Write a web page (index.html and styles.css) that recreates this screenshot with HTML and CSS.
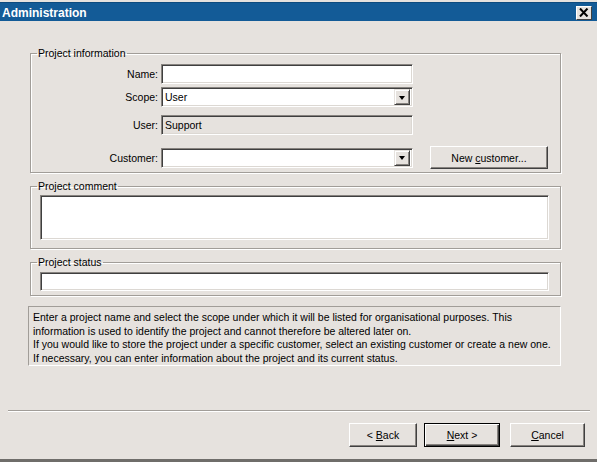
FILE: index.html
```html
<!DOCTYPE html>
<html>
<head>
<meta charset="utf-8">
<link rel="stylesheet" href="styles.css">
</head>
<body>
<div class="window">
  <div class="titlebar">
    <span class="title">Administration</span>
    <span class="close"><svg width="10" height="9" viewBox="0 0 10 9"><path d="M1 0.5 L8.5 8.5 M8.5 0.5 L1 8.5" stroke="#000" stroke-width="2"/></svg></span>
  </div>
  <div class="content">
    <fieldset class="group group-info">
      <legend>Project information</legend>
      <div class="row">
        <label class="lbl">Name:</label>
        <div class="field"></div>
      </div>
      <div class="row row-scope">
        <label class="lbl">Scope:</label>
        <div class="field combo"><span class="val">User</span><span class="drop"><span class="tri"></span></span></div>
      </div>
      <div class="row row-user">
        <label class="lbl">User:</label>
        <div class="field readonly"><span class="val">Support</span></div>
      </div>
      <div class="row row-customer">
        <label class="lbl">Customer:</label>
        <div class="field combo"><span class="val"></span><span class="drop"><span class="tri"></span></span></div>
        <button class="btn btn-new">New <u>c</u>ustomer...</button>
      </div>
    </fieldset>
    <fieldset class="group group-comment">
      <legend>Project comment</legend>
      <div class="field textarea"></div>
    </fieldset>
    <fieldset class="group group-status">
      <legend>Project status</legend>
      <div class="field status"></div>
    </fieldset>
    <div class="info">Enter a project name and select the scope under which it will be listed for organisational purposes. This information is used to identify the project and cannot therefore be altered later on.<br>If you would like to store the project under a specific customer, select an existing customer or create a new one.<br>If necessary, you can enter information about the project and its current status.</div>
  </div>
  <div class="separator"></div>
  <div class="buttons">
    <button class="btn btn-back">&lt; <u>B</u>ack</button>
    <button class="btn btn-next"><u>N</u>ext &gt;</button>
    <button class="btn btn-cancel"><u>C</u>ancel</button>
  </div>
</div>
</body>
</html>
```

FILE: styles.css
```css
html, body {
  margin: 0;
  padding: 0;
}
body {
  background: #e6e2de;
  font-family: "Liberation Sans", Arial, sans-serif;
  font-size: 10.5px;
  color: #000;
}
.window {
  width: 597px;
  height: 462px;
  box-sizing: border-box;
  padding-top: 2px;
  border-bottom: 3px solid #6f6d6a;
  display: flex;
  flex-direction: column;
  background: #e6e2de;
}
.titlebar {
  height: 19px;
  background: #135b97;
  border-top: 1px solid #0d4b7f;
  box-sizing: border-box;
  display: flex;
  align-items: center;
  justify-content: space-between;
  padding: 1px 5px 0 2px;
}
.title {
  color: #fff;
  font-weight: bold;
  font-size: 12px;
}
.close {
  width: 16px;
  height: 14px;
  box-sizing: border-box;
  background: #e6e2de;
  border: 1px solid;
  border-color: #fff #404040 #404040 #fff;
  display: flex;
  align-items: center;
  justify-content: center;
}
.content {
  padding: 26px 36px 0 30px;
  display: flex;
  flex-direction: column;
}
.group {
  margin: 0;
  padding: 0;
  border: 1px solid #a19d98;
  box-shadow: inset 1px 1px 0 #fff, 1px 1px 0 #fff;
  min-width: 0;
}
.group legend {
  padding: 0 1px;
  margin-left: 6px;
  line-height: 13px;
  font-size: 10.5px;
}
.group-info {
  padding: 4px 0 3px 0;
}
.row {
  display: flex;
  align-items: center;
  height: 20px;
}
.row-scope { margin-top: 3px; }
.row-user { margin-top: 8px; }
.row-customer { margin-top: 11px; height: 23px; }
.lbl {
  width: 127px;
  margin-right: 3px;
  text-align: right;
}
.field {
  width: 252px;
  height: 20px;
  box-sizing: border-box;
  background: #fff;
  border: 1px solid;
  border-color: #87837f #fff #fff #87837f;
  box-shadow: inset 1px 1px 0 #3f3f3f, inset -1px -1px 0 #dcd8d3;
  display: flex;
  align-items: center;
  padding: 0 2px 0 3px;
}
.readonly {
  background: #e6e2de;
}
.val {
  flex: 1;
}
.drop {
  width: 16px;
  height: 16px;
  box-sizing: border-box;
  background: #e6e2de;
  border: 1px solid;
  border-color: #e6e2de #404040 #404040 #e6e2de;
  box-shadow: inset 1px 1px 0 #fff, inset -1px -1px 0 #87837f;
  display: flex;
  align-items: center;
  justify-content: center;
}
.tri {
  width: 0;
  height: 0;
  border-left: 3.5px solid transparent;
  border-right: 3.5px solid transparent;
  border-top: 4px solid #000;
  margin-top: 1px;
}
.btn {
  font-family: "Liberation Sans", Arial, sans-serif;
  font-size: 10.5px;
  color: #000;
  background: #e6e2de;
  border: 1px solid;
  border-color: #fff #404040 #404040 #fff;
  box-shadow: inset -1px -1px 0 #87837f;
  padding: 0;
  height: 23px;
  box-sizing: border-box;
}
.btn-new {
  margin-left: 17px;
  width: 118px;
}
.group-comment {
  margin-top: 7px;
  padding: 2px 11px 8px 9px;
}
.group-comment legend,
.group-status legend {
  margin-left: -3px;
}
.textarea {
  width: 509px;
  height: 45px;
}
.group-status {
  margin-top: 7px;
  padding: 3px 11px 4px 9px;
}
.status {
  width: 509px;
  height: 19px;
}
.info {
  margin-top: 10px;
  margin-left: -2px;
  height: 60px;
  box-sizing: border-box;
  border: 1px solid;
  border-color: #a19d98 #fff #fff #a19d98;
  padding: 4px 3px 0 4px;
  line-height: 13.5px;
}
.separator {
  margin: auto 7px 0 8px;
  height: 1px;
  background: #a19d98;
  border-bottom: 1px solid #fff;
}
.buttons {
  display: flex;
  justify-content: flex-end;
  padding: 11px 12px 0 0;
  height: 37px;
  box-sizing: border-box;
  margin-bottom: 10px;
}
.btn-back {
  width: 68px;
  height: 24px;
}
.btn-next {
  width: 76px;
  height: 24px;
  margin-left: 7px;
  border: 1px solid #000;
  box-shadow: inset 1px 1px 0 #fff, inset -1px -1px 0 #404040, inset -2px -2px 0 #87837f;
}
.btn-cancel {
  width: 75px;
  height: 24px;
  margin-left: 10px;
}
```
